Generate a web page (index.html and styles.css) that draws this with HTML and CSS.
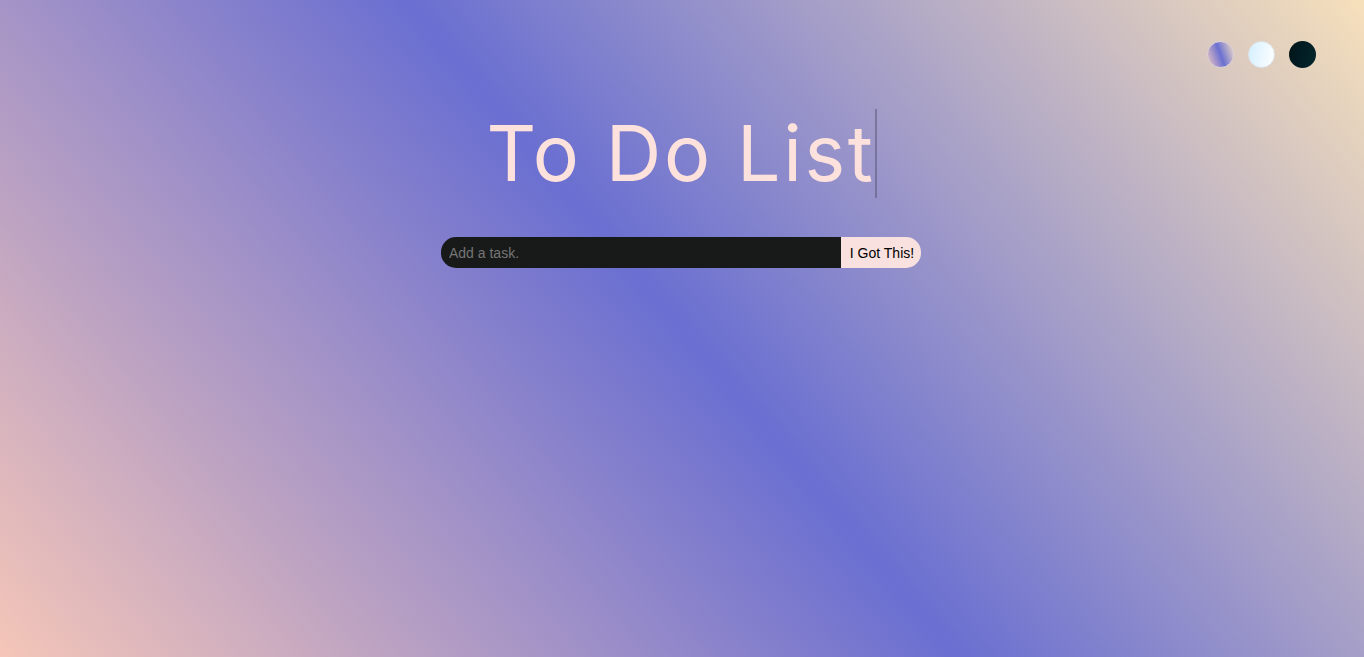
FILE: index.html
```html
<!DOCTYPE html>
<html lang="en">
<head>
<meta charset="utf-8">
<title>To Do List</title>
<link rel="stylesheet" href="styles.css">
</head>
<body>
<div class="page">
  <div class="themes">
    <div class="theme theme-standard"></div>
    <div class="theme theme-light"></div>
    <div class="theme theme-dark"></div>
  </div>
  <header class="title-wrap">
    <h1 class="title">To Do List</h1>
  </header>
  <form class="todo-form">
    <input class="todo-input" type="text" placeholder="Add a task.">
    <button class="todo-btn" type="button">I Got This!</button>
  </form>
</div>
</body>
</html>
```

FILE: styles.css
```css
* { box-sizing: border-box; }
html, body { margin: 0; padding: 0; }
body {
  min-height: 100vh;
  background-image: linear-gradient(50deg, #f5c6b8 0%, #6a6fd1 50%, #f6e0bb 100%);
  font-family: "Liberation Sans", Arial, sans-serif;
  overflow: hidden;
}
.page {
  min-height: 100vh;
  display: flex;
  flex-direction: column;
}
.themes {
  display: flex;
  justify-content: flex-end;
  gap: 14px;
  padding: 41px 48px 0 0;
}
.theme {
  width: 27px;
  height: 27px;
  border-radius: 50%;
}
.theme-standard {
  background-image: linear-gradient(70deg, #f0c9c0 0%, #6a6fd1 50%, #f3ddc4 100%);
  border: 1.5px solid #d9d0dc;
}
.theme-light {
  background-image: linear-gradient(100deg, #d4efff, #ffffff);
  border: 1.5px solid #dde6ee;
}
.theme-dark {
  background-image: linear-gradient(100deg, #011519, #03262d);
}
.title-wrap {
  display: flex;
  justify-content: center;
  margin-top: 41px;
}
.title {
  margin: 0;
  font-family: Inter, "Open Sans", sans-serif;
  font-weight: 400;
  font-size: 77px;
  line-height: 89px;
  color: #fde1dc;
  border-right: 2px solid rgba(90, 90, 120, 0.55);
  padding-right: 0;
  white-space: nowrap;
  letter-spacing: 2.6px;
}
.todo-form {
  display: flex;
  justify-content: center;
  margin-top: 39px;
  padding-right: 2px;
}
.todo-input {
  width: 400px;
  height: 31px;
  border: none;
  outline: none;
  background: #181a19;
  border-radius: 15px 0 0 15px;
  padding: 0 8px;
  font-family: "Liberation Sans", Arial, sans-serif;
  font-size: 14px;
  color: #ddd;
}
.todo-input::placeholder { color: #757575; }
.todo-btn {
  width: 80px;
  height: 31px;
  border: none;
  background: #f8e1de;
  border-radius: 0 15px 15px 0;
  font-family: "Liberation Sans", Arial, sans-serif;
  font-size: 14px;
  color: #000;
  padding: 0 0 0 2px;
  text-align: center;
}
```
